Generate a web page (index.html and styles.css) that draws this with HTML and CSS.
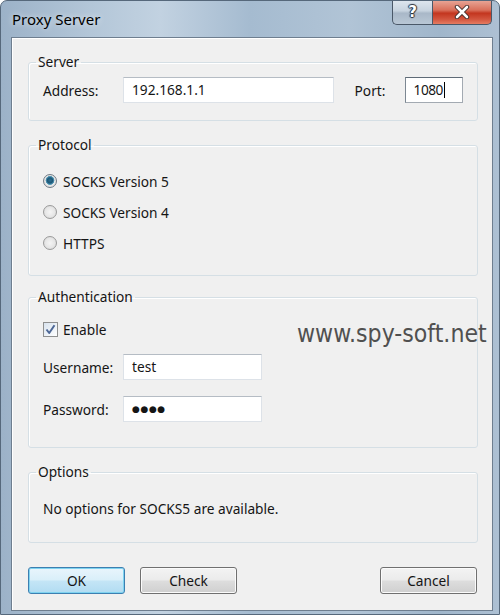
FILE: index.html
```html
<!DOCTYPE html>
<html>
<head>
<meta charset="utf-8">
<title>Proxy Server</title>
<link rel="stylesheet" href="styles.css">
</head>
<body>
<div class="window">
  <div class="titlebar">
    <span class="title">Proxy Server</span>
    <div class="caption">
      <div class="cap-btn help"><span class="help-glyph">?</span></div>
      <div class="cap-btn close">
        <svg width="16" height="14" viewBox="0 0 16 14"><path d="M3 2 L13 12 M13 2 L3 12" stroke="#3a2a28" stroke-width="4.4" stroke-linecap="round"/><path d="M3 2 L13 12 M13 2 L3 12" stroke="#ffffff" stroke-width="2.6" stroke-linecap="round"/></svg>
      </div>
    </div>
  </div>
  <div class="client">
    <fieldset class="group server">
      <legend>Server</legend>
      <div class="row">
        <span class="lbl">Address:</span>
        <div class="field addr">192.168.1.1</div>
        <span class="lbl port-lbl">Port:</span>
        <div class="field port focused">1080<span class="caret"></span></div>
      </div>
    </fieldset>
    <fieldset class="group protocol">
      <legend>Protocol</legend>
      <div class="radio-list">
        <div class="opt"><span class="radio checked"></span>SOCKS Version 5</div>
        <div class="opt"><span class="radio"></span>SOCKS Version 4</div>
        <div class="opt"><span class="radio"></span>HTTPS</div>
      </div>
    </fieldset>
    <fieldset class="group auth">
      <legend>Authentication</legend>
      <div class="opt check-row"><span class="checkbox"><svg width="13" height="13" viewBox="0 0 13 13"><path d="M2.5 6.5 L5.2 10 L10.5 2.2" fill="none" stroke="#4d6796" stroke-width="2" stroke-linejoin="round"/></svg></span>Enable</div>
      <div class="row user-row">
        <span class="lbl">Username:</span>
        <div class="field small">test</div>
      </div>
      <div class="row pass-row">
        <span class="lbl">Password:</span>
        <div class="field small dots">●●●●</div>
      </div>
    </fieldset>
    <fieldset class="group options">
      <legend>Options</legend>
      <p class="note">No options for SOCKS5 are available.</p>
    </fieldset>
    <div class="buttons">
      <button class="btn default">OK</button>
      <button class="btn">Check</button>
      <button class="btn cancel">Cancel</button>
    </div>
  </div>
  <div class="watermark">www.spy-soft.net</div>
</div>
</body>
</html>
```
FILE: styles.css
```css
html, body {
  margin: 0;
  padding: 0;
  background: #ffffff;
}

body {
  font-family: "Noto Sans", "Open Sans", "DejaVu Sans", sans-serif;
  color: #151515;
}

.window {
  position: relative;
  width: 500px;
  height: 615px;
  box-sizing: border-box;
  border: 1px solid #56687b;
  border-radius: 7px 7px 0 0;
  background:
    linear-gradient(90deg, #9cb2c8 0%, #b3c6d8 18%, #c2d2e1 32%, #a5bbd0 50%, #b1c4d6 70%, #a0b6cb 88%, #adc0d3 100%);
  overflow: hidden;
}

.titlebar {
  height: 36px;
  display: flex;
  justify-content: space-between;
  align-items: flex-start;
  padding-left: 11px;
}

.title {
  font-size: 15px;
  line-height: 36px;
  color: #000;
  text-shadow: 0 0 6px rgba(255, 255, 255, 0.8);
}

.caption {
  display: flex;
  margin-right: 7px;
  margin-top: -1px;
}

.cap-btn {
  height: 25px;
  box-sizing: border-box;
  border: 1px solid #4a5868;
  border-top: none;
  display: flex;
  align-items: center;
  justify-content: center;
}

.help {
  width: 40px;
  border-radius: 0 0 0 5px;
  border-right: none;
  background: linear-gradient(#dfe7ef 0%, #c7d3df 45%, #a9b8c8 55%, #b9c7d5 100%);
}

.help-glyph {
  font-family: "DejaVu Sans", sans-serif;
  font-weight: bold;
  font-size: 15px;
  color: #ffffff;
  text-shadow: 0 0 1px #2b3440, 1px 0 1px #2b3440, -1px 0 1px #2b3440, 0 1px 1px #2b3440, 0 -1px 1px #2b3440;
  line-height: 1;
}

.close {
  width: 60px;
  border-radius: 0 0 5px 0;
  background: linear-gradient(#e9a99a 0%, #d9705b 42%, #c3361f 55%, #d2553e 80%, #e57c62 100%);
}

.client {
  margin-left: 10px;
  width: 482px;
  height: 574px;
  box-sizing: border-box;
  border: 1px solid #6e7e8f;
  box-shadow: inset 1px 1px 0 #ffffff;
  background: #f0f0f0;
  padding: 15px 14px 0 16px;
}

.group {
  margin: 0;
  padding: 6px 14px 17px 14px;
  min-width: 0;
  border: 1px solid #d5dfe5;
  border-radius: 3px;
  box-shadow: inset 1px 1px 0 #ffffff;
}

.group legend {
  font-size: 13.7px;
  line-height: 18px;
  padding: 0 2px;
  margin-left: -7px;
  color: #151515;
}

.row {
  display: flex;
  align-items: center;
  height: 26px;
  font-size: 13.7px;
}

.lbl {
  width: 80px;
  flex: none;
}

.port-lbl {
  width: 50px;
  margin-left: 21px;
}

.field {
  height: 26px;
  box-sizing: border-box;
  background: #ffffff;
  border: 1px solid #dde2e8;
  border-top-color: #b5bcc4;
  font-size: 13.7px;
  line-height: 24px;
  padding-left: 8px;
  white-space: nowrap;
}

.addr {
  width: 213px;
}

.port {
  width: 59px;
}

.port.focused {
  border-color: #a3aab2;
  border-top-color: #5f6b77;
  border-left-color: #7c8792;
  letter-spacing: -0.5px;
}

.caret {
  display: inline-block;
  width: 1px;
  height: 16px;
  background: #000;
  vertical-align: -3px;
  margin-left: 1px;
}

.small {
  width: 139px;
}

.dots {
  font-size: 9px;
  letter-spacing: 0.6px;
}

.protocol {
  margin-top: 15px;
  padding: 15px 14px 20px 14px;
}

.radio-list {
  display: flex;
  flex-direction: column;
  gap: 7px;
}

.opt {
  display: flex;
  align-items: center;
  height: 24px;
  font-size: 13.7px;
}

.radio {
  width: 14px;
  height: 14px;
  box-sizing: border-box;
  border-radius: 50%;
  border: 1px solid #9a9a9a;
  background: radial-gradient(circle at 50% 50%, #f4f4f4 0%, #e6e6e6 55%, #cfcfcf 100%);
  margin-right: 6px;
  flex: none;
}

.radio.checked {
  border-color: #6f7a85;
  background:
    radial-gradient(circle at 50% 45%, #2a6f8f 0%, #1c5777 30%, #5ea3c0 48%, transparent 52%),
    radial-gradient(circle at 50% 50%, #f6f6f6 0%, #e2e2e2 70%, #cbcbcb 100%);
}

.auth {
  margin-top: 12px;
  padding: 13px 14px 25px 14px;
}

.check-row {
  height: 20px;
}

.checkbox {
  width: 15px;
  height: 15px;
  box-sizing: border-box;
  border: 1px solid #8e8f8f;
  background: linear-gradient(135deg, #d9e3ee 0%, #eef3f8 60%, #ffffff 100%);
  margin-right: 5px;
  display: flex;
  align-items: center;
  justify-content: center;
  flex: none;
}

.user-row {
  margin-top: 15px;
}

.pass-row {
  margin-top: 16px;
}

.options {
  margin-top: 15px;
  padding: 18px 14px 23px 14px;
}

.note {
  margin: 0;
  font-size: 13.7px;
  line-height: 20px;
}

.buttons {
  display: flex;
  gap: 15px;
  margin-top: 24px;
}

.btn {
  width: 97px;
  height: 27px;
  box-sizing: border-box;
  border: 1px solid #707070;
  border-radius: 3px;
  background: linear-gradient(#f3f3f3 0%, #ebebeb 48%, #dddddd 52%, #cfcfcf 100%);
  box-shadow: inset 0 0 0 1px #fbfbfb;
  font-family: "Noto Sans", "Open Sans", "DejaVu Sans", sans-serif;
  font-size: 13.7px;
  color: #151515;
  padding: 0;
}

.btn.default {
  border-color: #3c7fb1;
  background: linear-gradient(#e9f5fc 0%, #d9eff9 48%, #c4e5f6 52%, #b1dcf2 100%);
  box-shadow: inset 0 0 0 1px #7fd3f0;
}

.btn.cancel {
  margin-left: auto;
  margin-right: 1px;
}

.watermark {
  position: absolute;
  left: 296px;
  top: 318px;
  font-family: "DejaVu Sans Condensed", "DejaVu Sans", sans-serif;
  font-size: 24.6px;
  color: #505050;
  white-space: nowrap;
}
```
